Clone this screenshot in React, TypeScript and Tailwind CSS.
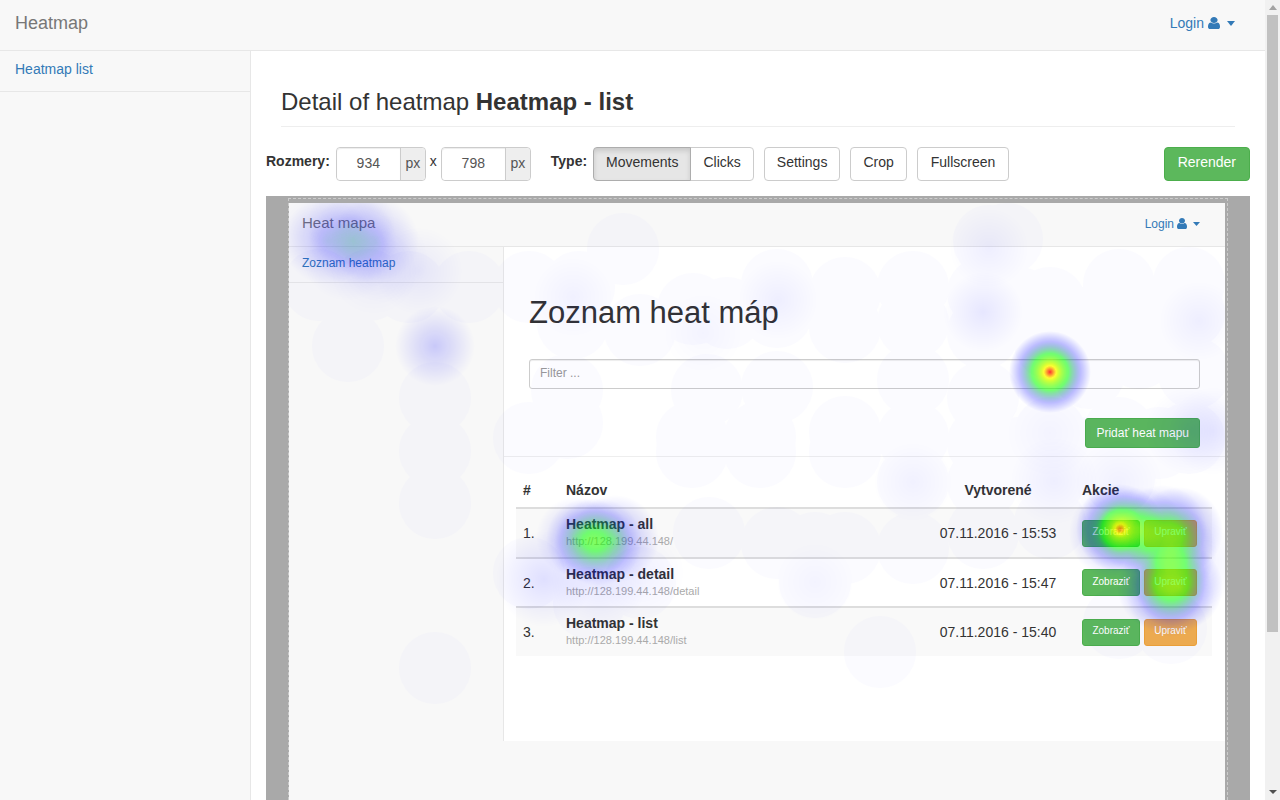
import React from 'react';

type Point = [x: number, y: number, strength: number, radius?: number];

const hotPoints: Point[] = [
  [64, 38, 0.15, 44],
  [38, 38, 0.17, 44],
  [86, 38, 0.17, 44],
  [62, 22, 0.11, 44],
  [24, 30, 0.06, 40],
  [58, 54, 0.08, 44],
  [95, 56, 0.07, 44],
  [130, 68, 0.06, 44],
  [85, 68, 0.04, 44],
  [146, 143, 0.19],
  [700, 45, 0.05],
  [694, 109, 0.08],
  [489, 97, 0.05],
  [414, 130, 0.03],
  [284, 94, 0.04],
  [910, 118, 0.05],
  [900, 228, 0.06, 44],
  [924, 228, 0.07, 44],
  [624, 279, 0.04],
  [761, 169, 1, 41],
  [761, 230, 0.03, 44],
  [765, 278, 0.05, 44],
  [830, 280, 0.04, 44],
  [526, 379, 0.03],
  [299, 337, 0.32, 42],
  [309, 339, 0.32, 44],
  [326, 336, 0.28, 44],
  [287, 334, 0.18, 40],
  [255, 376, 0.11, 48],
  [310, 378, 0.08, 48],
  [352, 370, 0.04, 44],
  [831, 325, 0.6, 44],
  [831, 326, 0.45, 24],
  [831, 326, 0.5, 9],
  [826, 330, 0.28, 46],
  [852, 328, 0.28, 44],
  [874, 326, 0.32, 44],
  [890, 328, 0.38, 44],
  [884, 348, 0.24, 44],
  [879, 364, 0.22, 44],
  [872, 384, 0.32, 44],
  [890, 384, 0.4, 44],
  [881, 390, 0.24, 44],
  [908, 360, 0.06, 44],
];

const faintPoints: [number, number][] = [
  [59, 143], [146, 195], [146, 248], [146, 300], [146, 465], [30, 82], [80, 82],
  [120, 84], [180, 84], [240, 84], [334, 46], [290, 84], [284, 120], [351, 127],
  [404, 106], [438, 110], [488, 82], [488, 109], [556, 90], [556, 124], [624, 84],
  [624, 120], [700, 38], [718, 36], [694, 90], [694, 130], [278, 187], [278, 220],
  [240, 235], [418, 187], [488, 184], [403, 234], [403, 249], [471, 234], [471, 249],
  [556, 229], [556, 249], [624, 177], [624, 234], [624, 279], [694, 194], [694, 240],
  [730, 100], [761, 100], [761, 140], [790, 120], [761, 230], [761, 275], [830, 82],
  [830, 120], [800, 170], [850, 150], [830, 230], [870, 120], [870, 240], [800, 250],
  [830, 275], [900, 80], [900, 110], [905, 170], [900, 235], [694, 280], [730, 250],
  [591, 449], [830, 420], [882, 425], [240, 370], [300, 400], [351, 380], [526, 379],
  [420, 330], [488, 340], [556, 345], [624, 345], [526, 345], [694, 330], [761, 320],
];

function HeatOverlay() {
  return (
    <svg className="pointer-events-none absolute inset-0 h-full w-full" aria-hidden="true">
      <defs>
        <radialGradient id="spot">
          <stop offset="0" stopColor="#000" stopOpacity="1" />
          <stop offset="1" stopColor="#000" stopOpacity="0" />
        </radialGradient>
        <filter
          id="colorize"
          filterUnits="userSpaceOnUse"
          x="0"
          y="0"
          width="940"
          height="620"
          colorInterpolationFilters="sRGB"
        >
          <feColorMatrix type="matrix" values="0 0 0 1 0  0 0 0 1 0  0 0 0 1 0  0 0 0 1 0" />
          <feComponentTransfer>
            <feFuncR type="table" tableValues="0 0 0 0 0 0 0 0 0 0 0 0 .167 .333 .5 .667 .833 1 1 1 1" />
            <feFuncG type="table" tableValues="0 0 0 0 0 0 .167 .333 .5 .667 .833 1 1 1 1 1 1 1 .667 .333 0" />
            <feFuncB type="table" tableValues="1 1 1 1 1 1 .833 .667 .5 .333 .167 0 0 0 0 0 0 0 0 0 0" />
            <feFuncA type="table" tableValues="0 .1 .2 .3 .4 .5 .6 .7 .8 .8 .8" />
          </feComponentTransfer>
        </filter>
      </defs>
      <g opacity="0.01" fill="#0000ff">
        {faintPoints.map(([x, y], i) => (
          <circle key={i} cx={x} cy={y} r="36" />
        ))}
      </g>
      <g filter="url(#colorize)">
        {hotPoints.map(([x, y, strength, radius = 40], i) => (
          <circle key={i} cx={x} cy={y} r={radius} fill="url(#spot)" opacity={strength} />
        ))}
      </g>
    </svg>
  );
}

const rows = [
  { id: 1, name: 'Heatmap - all', url: 'http://128.199.44.148/', created: '07.11.2016 - 15:53' },
  { id: 2, name: 'Heatmap - detail', url: 'http://128.199.44.148/detail', created: '07.11.2016 - 15:47' },
  { id: 3, name: 'Heatmap - list', url: 'http://128.199.44.148/list', created: '07.11.2016 - 15:40' },
];

function Caret({ className }: { className: string }) {
  return (
    <svg viewBox="0 0 8 4" preserveAspectRatio="none" className={className} fill="currentColor" aria-hidden="true">
      <path d="M0 0h8L4 4z" />
    </svg>
  );
}

function UserIcon({ className }: { className: string }) {
  return (
    <svg viewBox="0 128 1280 1536" preserveAspectRatio="none" className={className} fill="currentColor" aria-hidden="true">
      <path d="M1280 1399q0 109-62.5 187t-150.5 78h-854q-88 0-150.5-78t-62.5-187q0-85 8.5-160.5t31.5-152 58.5-131 94-89 134.5-34.5q131 128 313 128t313-128q76 0 134.5 34.5t94 89 58.5 131 31.5 152 8.500 160.500zm-256-887q0 159-112.500 271.500t-271.500 112.500-271.500-112.500-112.500-271.500 112.500-271.500 271.500-112.500 271.500 112.500 112.500 271.500z" />
    </svg>
  );
}

function Preview() {
  return (
    <div className="relative flex flex-1 flex-col bg-[#f8f8f8] text-[#333]">
      <div className="flex h-11 shrink-0 items-center justify-between border-b border-[#e7e7e7] px-[13px]">
        <span className="pb-1 text-[15px] leading-5 text-[#777]">Heat mapa</span>
        <a href="#preview-login" className="flex items-center pr-3 pb-0.5 text-xs text-[#337ab7]">
          Login
          <UserIcon className="ml-[3px] h-[11px] w-[10px]" />
          <Caret className="ml-1.5 h-1 w-[7px]" />
        </a>
      </div>
      <div className="flex">
        <div className="w-[215px] shrink-0 border-r border-[#e7e7e7]">
          <a
            href="#preview-list"
            className="block border-b border-[#e7e7e7] px-[13px] pt-2 pb-[11px] text-xs leading-4 text-[#337ab7]"
          >
            Zoznam heatmap
          </a>
        </div>
        <div className="min-w-0 flex-1 bg-white pb-[85px]">
          <div className="border-b border-[#eee] px-[25px] pt-12 pb-2">
            <h2 className="text-[31px] leading-9">Zoznam heat máp</h2>
            <input
              aria-label="Filter"
              placeholder="Filter ..."
              className="mt-7 block h-[30px] w-full rounded-[3px] border border-[#ccc] bg-white px-[10px] pb-0.5 text-xs shadow-[inset_0_1px_1px_rgba(0,0,0,0.075)] placeholder:text-[#999]"
            />
            <button className="mt-[29px] ml-auto block h-[30px] rounded-[3px] border border-[#4cae4c] bg-[#5cb85c] px-[10px] text-xs text-white">
              Pridať heat mapu
            </button>
          </div>
          <div className="pt-[15px] pr-[13px] pl-3">
            <table className="w-full table-fixed border-collapse text-left text-sm leading-5">
              <colgroup>
                <col className="w-[43px]" />
                <col />
                <col className="w-[154px]" />
                <col className="w-[137px]" />
              </colgroup>
              <thead>
                <tr className="h-9 border-b-2 border-[#ddd]">
                  <th className="px-[7px]">#</th>
                  <th className="px-[7px]">Názov</th>
                  <th className="px-[7px] text-center">Vytvorené</th>
                  <th className="px-[7px]">Akcie</th>
                </tr>
              </thead>
              <tbody>
                {rows.map((row) => (
                  <tr key={row.id} className="h-[49px] border-[#ddd] not-first:border-t-2 first:h-[50px] odd:bg-[#f9f9f9]">
                    <td className="px-[7px]">{row.id}.</td>
                    <td className="px-[7px]">
                      <div className="leading-[17px] font-bold">{row.name}</div>
                      <div className="text-[11px] leading-[17px] text-[#aaa]">{row.url}</div>
                    </td>
                    <td className="px-[7px] text-center whitespace-nowrap">{row.created}</td>
                    <td className="px-[7px]">
                      <div className="flex gap-1">
                        <button className="h-[27px] w-[58px] rounded-[3px] border border-[#4cae4c] bg-[#5cb85c] pb-0.5 text-[10px] text-white">
                          Zobraziť
                        </button>
                        <button className="h-[27px] w-[53px] rounded-[3px] border border-[#eea236] bg-[#f0ad4e] pb-0.5 text-[10px] text-white">
                          Upraviť
                        </button>
                      </div>
                    </td>
                  </tr>
                ))}
              </tbody>
            </table>
          </div>
        </div>
      </div>
      <HeatOverlay />
    </div>
  );
}

function SizeField({ label, value }: { label: string; value: string }) {
  return (
    <div className="flex h-[34px] rounded border border-[#ccc]">
      <input
        aria-label={label}
        defaultValue={value}
        className="w-[63px] rounded-l bg-white pb-0.5 text-center text-[#555] shadow-[inset_0_1px_1px_rgba(0,0,0,0.075)]"
      />
      <span className="flex w-[25px] items-center justify-center rounded-r border-l border-[#ccc] bg-[#eee] pb-0.5 text-[#555]">
        px
      </span>
    </div>
  );
}

const button = 'h-[34px] border pb-1 leading-5';
const plain = 'border-[#ccc] bg-white';

export default function App() {
  return (
    <div className="flex h-screen overflow-hidden bg-white font-['Liberation_Sans',Arial,sans-serif] text-sm text-[#333]">
      <div className="flex min-w-0 flex-1 flex-col">
        <nav className="flex h-[51px] shrink-0 items-center justify-between border-b border-[#e7e7e7] bg-[#f8f8f8] pr-[30px] pb-1 pl-[15px]">
          <a href="#home" className="text-lg leading-5 text-[#777]">Heatmap</a>
          <a href="#login" className="flex items-center text-[#337ab7]">
            Login
            <UserIcon className="ml-1 h-3 w-3" />
            <Caret className="ml-[7px] h-[5px] w-2" />
          </a>
        </nav>
        <div className="flex min-h-0 flex-1">
          <aside className="w-[251px] shrink-0 border-r border-[#e7e7e7] bg-[#f8f8f8]">
            <a href="#list" className="block border-b border-[#e7e7e7] px-[15px] pt-2 pb-3 leading-5 text-[#337ab7]">
              Heatmap list
            </a>
          </aside>
          <main className="flex min-w-0 flex-1 flex-col px-[15px]">
            <h1 className="mx-[15px] mt-[37px] border-b border-[#eee] pb-[10px] text-2xl leading-7">
              Detail of heatmap <strong>Heatmap - list</strong>
            </h1>
            <div className="mt-5 flex shrink-0">
              <span className="mr-1.5 pt-1 leading-5 font-bold">Rozmery:</span>
              <SizeField label="Width" value="934" />
              <span className="px-1 pt-1 leading-5">x</span>
              <SizeField label="Height" value="798" />
              <span className="mr-1.5 ml-5 pt-1 leading-5 font-bold">Type:</span>
              <button
                className={`${button} relative rounded-l border-[#adadad] bg-[#e6e6e6] px-3 shadow-[inset_0_3px_5px_rgba(0,0,0,0.125)]`}
              >
                Movements
              </button>
              <button className={`${button} ${plain} -ml-px rounded-r px-3`}>Clicks</button>
              <button className={`${button} ${plain} ml-[10px] rounded px-3`}>Settings</button>
              <button className={`${button} ${plain} ml-[10px] rounded px-3`}>Crop</button>
              <button className={`${button} ${plain} ml-[10px] rounded px-[13px]`}>Fullscreen</button>
              <button className={`${button} ml-auto rounded border-[#4cae4c] bg-[#5cb85c] px-[13px] text-white`}>
                Rerender
              </button>
            </div>
            <div className="mt-[15px] flex min-h-0 flex-1 bg-[#a9a9a9] px-[22px] pt-0.5">
              <div className="flex min-w-0 flex-1 border border-b-0 border-dashed border-[#ccc] pt-1 pr-0.5">
                <Preview />
              </div>
            </div>
          </main>
        </div>
      </div>
      <div className="flex w-[15px] shrink-0 flex-col items-center justify-between bg-[#f1f1f1]" aria-hidden="true">
        <div className="flex h-[632px] flex-col items-center">
          <Caret className="my-[5px] h-[5px] w-2 rotate-180 text-[#a3a3a3]" />
          <div className="w-[11px] flex-1 bg-[#c1c1c1]" />
        </div>
        <Caret className="mb-1.5 h-1 w-2 text-[#505050]" />
      </div>
    </div>
  );
}
